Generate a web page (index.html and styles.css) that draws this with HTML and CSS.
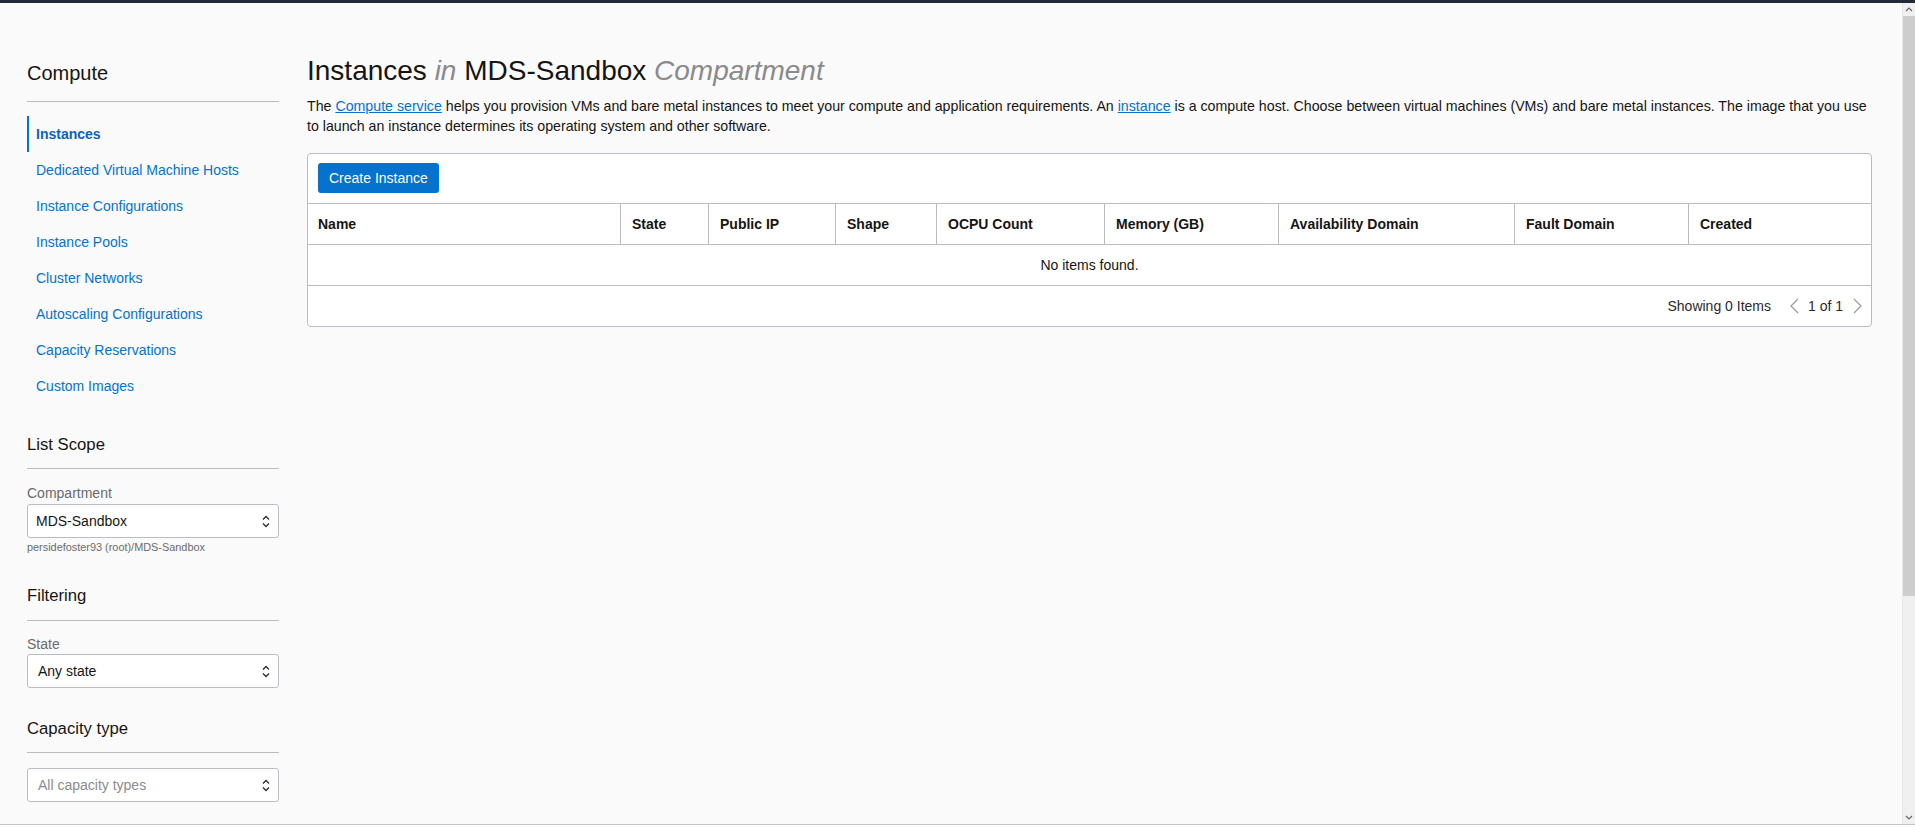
FILE: index.html
```html
<!DOCTYPE html>
<html lang="en">
<head>
<meta charset="utf-8">
<title>Instances | Compute</title>
<link rel="stylesheet" href="styles.css">
</head>
<body>
<div class="window">
  <div class="topbar"></div>
  <div class="viewport">
    <div class="page">
      <aside class="sidebar">
        <h2 class="side-title">Compute</h2>
        <div class="divider"></div>
        <nav class="side-nav">
          <a class="nav-item active">Instances</a>
          <a class="nav-item">Dedicated Virtual Machine Hosts</a>
          <a class="nav-item">Instance Configurations</a>
          <a class="nav-item">Instance Pools</a>
          <a class="nav-item">Cluster Networks</a>
          <a class="nav-item">Autoscaling Configurations</a>
          <a class="nav-item">Capacity Reservations</a>
          <a class="nav-item">Custom Images</a>
        </nav>

        <section class="side-section first">
          <h3 class="section-title">List Scope</h3>
          <div class="divider"></div>
          <div class="field-label">Compartment</div>
          <div class="select compact">
            <span class="select-value">MDS-Sandbox</span>
            <svg class="updown" width="8" height="13" viewBox="0 0 8 13"><path d="M1 4.5 L4 1.5 L7 4.5 M1 8.5 L4 11.5 L7 8.5" fill="none" stroke="#2b2b2b" stroke-width="1.3"/></svg>
          </div>
          <div class="helper">persidefoster93 (root)/MDS-Sandbox</div>
        </section>

        <section class="side-section">
          <h3 class="section-title">Filtering</h3>
          <div class="divider d12"></div>
          <div class="field-label tight">State</div>
          <div class="select flush">
            <span class="select-value">Any state</span>
            <svg class="updown" width="8" height="13" viewBox="0 0 8 13"><path d="M1 4.5 L4 1.5 L7 4.5 M1 8.5 L4 11.5 L7 8.5" fill="none" stroke="#2b2b2b" stroke-width="1.3"/></svg>
          </div>
        </section>

        <section class="side-section last">
          <h3 class="section-title">Capacity type</h3>
          <div class="divider"></div>
          <div class="select spaced">
            <span class="select-value placeholder">All capacity types</span>
            <svg class="updown" width="8" height="13" viewBox="0 0 8 13"><path d="M1 4.5 L4 1.5 L7 4.5 M1 8.5 L4 11.5 L7 8.5" fill="none" stroke="#2b2b2b" stroke-width="1.3"/></svg>
          </div>
        </section>
      </aside>

      <main class="content">
        <h1 class="page-title">Instances <em>in</em> MDS-Sandbox <em>Compartment</em></h1>
        <p class="intro">The <a class="link">Compute service</a> helps you provision VMs and bare metal instances to meet your compute and application requirements. An <a class="link">instance</a> is a compute host. Choose between virtual machines (VMs) and bare metal instances. The image that you use to launch an instance determines its operating system and other software.</p>

        <div class="table-card">
          <div class="toolbar">
            <button class="btn-primary">Create Instance</button>
          </div>
          <div class="grid-row head">
            <div class="cell">Name</div>
            <div class="cell">State</div>
            <div class="cell">Public IP</div>
            <div class="cell">Shape</div>
            <div class="cell">OCPU Count</div>
            <div class="cell">Memory (GB)</div>
            <div class="cell">Availability Domain</div>
            <div class="cell">Fault Domain</div>
            <div class="cell">Created</div>
          </div>
          <div class="empty-row">No items found.</div>
          <div class="pager">
            <span class="count">Showing 0 Items</span>
            <svg class="chev" width="10" height="16" viewBox="0 0 10 16"><path d="M9 1 L2 8 L9 15" fill="none" stroke="#9a9a9a" stroke-width="1.2"/></svg>
            <span class="pages">1 of 1</span>
            <svg class="chev" width="10" height="16" viewBox="0 0 10 16"><path d="M1 1 L8 8 L1 15" fill="none" stroke="#9a9a9a" stroke-width="1.2"/></svg>
          </div>
        </div>
      </main>
    </div>

    <div class="scrollbar">
      <div class="sb-btn">
        <svg width="8" height="5" viewBox="0 0 8 5"><path d="M1 4 L4 1 L7 4" fill="none" stroke="#6a6a6a" stroke-width="1.2"/></svg>
      </div>
      <div class="sb-thumb"></div>
      <div class="sb-track"></div>
      <div class="sb-btn">
        <svg width="8" height="5" viewBox="0 0 8 5"><path d="M1 1 L4 4 L7 1" fill="none" stroke="#6a6a6a" stroke-width="1.2"/></svg>
      </div>
    </div>
  </div>
  <div class="bottom-edge"></div>
</div>
</body>
</html>
```

FILE: styles.css
```css
* { box-sizing: border-box; }

html, body {
  margin: 0;
  padding: 0;
  height: 828px;
  overflow: hidden;
  font-family: "Liberation Sans", Arial, sans-serif;
  font-size: 14px;
  color: #161513;
  background: #fafafa;
}

.window {
  display: flex;
  flex-direction: column;
  height: 828px;
}

.topbar {
  height: 3px;
  background: #222a35;
  flex: none;
}

.viewport {
  flex: 1;
  display: flex;
  min-height: 0;
  background: #fafafa;
}

.bottom-edge {
  flex: none;
  height: 4px;
  border-top: 1px solid #c4c4c4;
  background: #ffffff;
}

.page {
  flex: 1;
  display: flex;
  gap: 28px;
  padding: 0 30px 0 27px;
}

/* ---------- Sidebar ---------- */
.sidebar {
  width: 252px;
  flex: none;
  padding-top: 56px;
}

.side-title {
  margin: 0;
  font-size: 20px;
  line-height: 28px;
  font-weight: 400;
}

.divider {
  height: 1px;
  background: #b9bdc3;
  margin-top: 11px;
}

.side-title + .divider { margin-top: 14px; }
.divider.d12 { margin-top: 12px; }

.side-nav {
  margin-top: 14px;
  display: flex;
  flex-direction: column;
}

.nav-item {
  height: 36px;
  display: flex;
  align-items: center;
  padding-left: 7px;
  border-left: 2px solid transparent;
  color: #0572ce;
  font-size: 14px;
  text-decoration: none;
}

.nav-item.active {
  border-left-color: #0572ce;
  font-weight: 700;
  color: #0b62c0;
}

.side-section { margin-top: 30px; }
.side-section.first { margin-top: 29px; }
.side-section.last { margin-top: 29px; }

.section-title {
  margin: 0;
  font-size: 16.7px;
  line-height: 24px;
  font-weight: 400;
}

.field-label {
  margin-top: 14px;
  line-height: 20px;
  color: #6b6b6b;
}

.field-label.tight { margin-top: 13px; }

.select {
  height: 34px;
  margin-top: 1px;
  border: 1px solid #b9bdc3;
  border-radius: 3px;
  background: #ffffff;
  display: flex;
  align-items: center;
  justify-content: space-between;
  padding: 0 8px 0 10px;
}

.select.compact { padding-left: 8px; }
.select.flush { margin-top: 0; }
.select.spaced { margin-top: 15px; }

.select-value { color: #161513; }
.select-value.placeholder { color: #8c8c8c; }

.updown { flex: none; }

.helper {
  margin-top: 2px;
  font-size: 10.9px;
  line-height: 14px;
  color: #6b6b6b;
}

/* ---------- Main content ---------- */
.content {
  flex: 1;
  min-width: 0;
  padding-top: 51px;
}

.page-title {
  margin: 0;
  font-size: 28px;
  line-height: 34px;
  font-weight: 400;
  color: #161513;
}

.page-title em {
  color: #8a8a8a;
  font-style: italic;
}

.intro {
  margin: 8px 0 0;
  font-size: 14.2px;
  line-height: 20px;
  color: #161513;
}

.link {
  color: #0572ce;
  text-decoration: underline;
}

.table-card {
  margin-top: 17px;
  border: 1px solid #b9bdc3;
  border-radius: 4px;
  background: #ffffff;
}

.toolbar {
  height: 49px;
  padding: 9px 0 0 10px;
}

.btn-primary {
  height: 30px;
  padding: 0 11px;
  border: none;
  border-radius: 3px;
  background: #0572ce;
  color: #ffffff;
  font-family: inherit;
  font-size: 14px;
}

.grid-row {
  display: grid;
  grid-template-columns: 312px 88px 127px 101px 168px 174px 236px 174px 1fr;
  border-top: 1px solid #b9bdc3;
}

.grid-row.head .cell {
  height: 40px;
  display: flex;
  align-items: center;
  padding: 0 11px;
  font-weight: 700;
  border-left: 1px solid #b9bdc3;
}

.grid-row.head .cell:first-child {
  border-left: none;
  padding-left: 10px;
}

.empty-row {
  height: 41px;
  border-top: 1px solid #b9bdc3;
  display: flex;
  align-items: center;
  justify-content: center;
}

.pager {
  height: 41px;
  border-top: 1px solid #b9bdc3;
  display: flex;
  align-items: center;
  justify-content: flex-end;
  padding-right: 8px;
  color: #2a2a2a;
}

.pager .count { margin-right: 18px; }
.pager .pages { margin: 0 10px 0 9px; }
.chev { flex: none; }

/* ---------- Scrollbar ---------- */
.scrollbar {
  width: 13px;
  flex: none;
  display: flex;
  flex-direction: column;
  background: #f0f0f0;
  border-left: 1px solid #e6e6e6;
}

.sb-btn {
  height: 13px;
  flex: none;
  display: flex;
  align-items: center;
  justify-content: center;
}

.sb-thumb {
  height: 580px;
  flex: none;
  background: #cdcdcd;
}

.sb-track { flex: 1; }
```
